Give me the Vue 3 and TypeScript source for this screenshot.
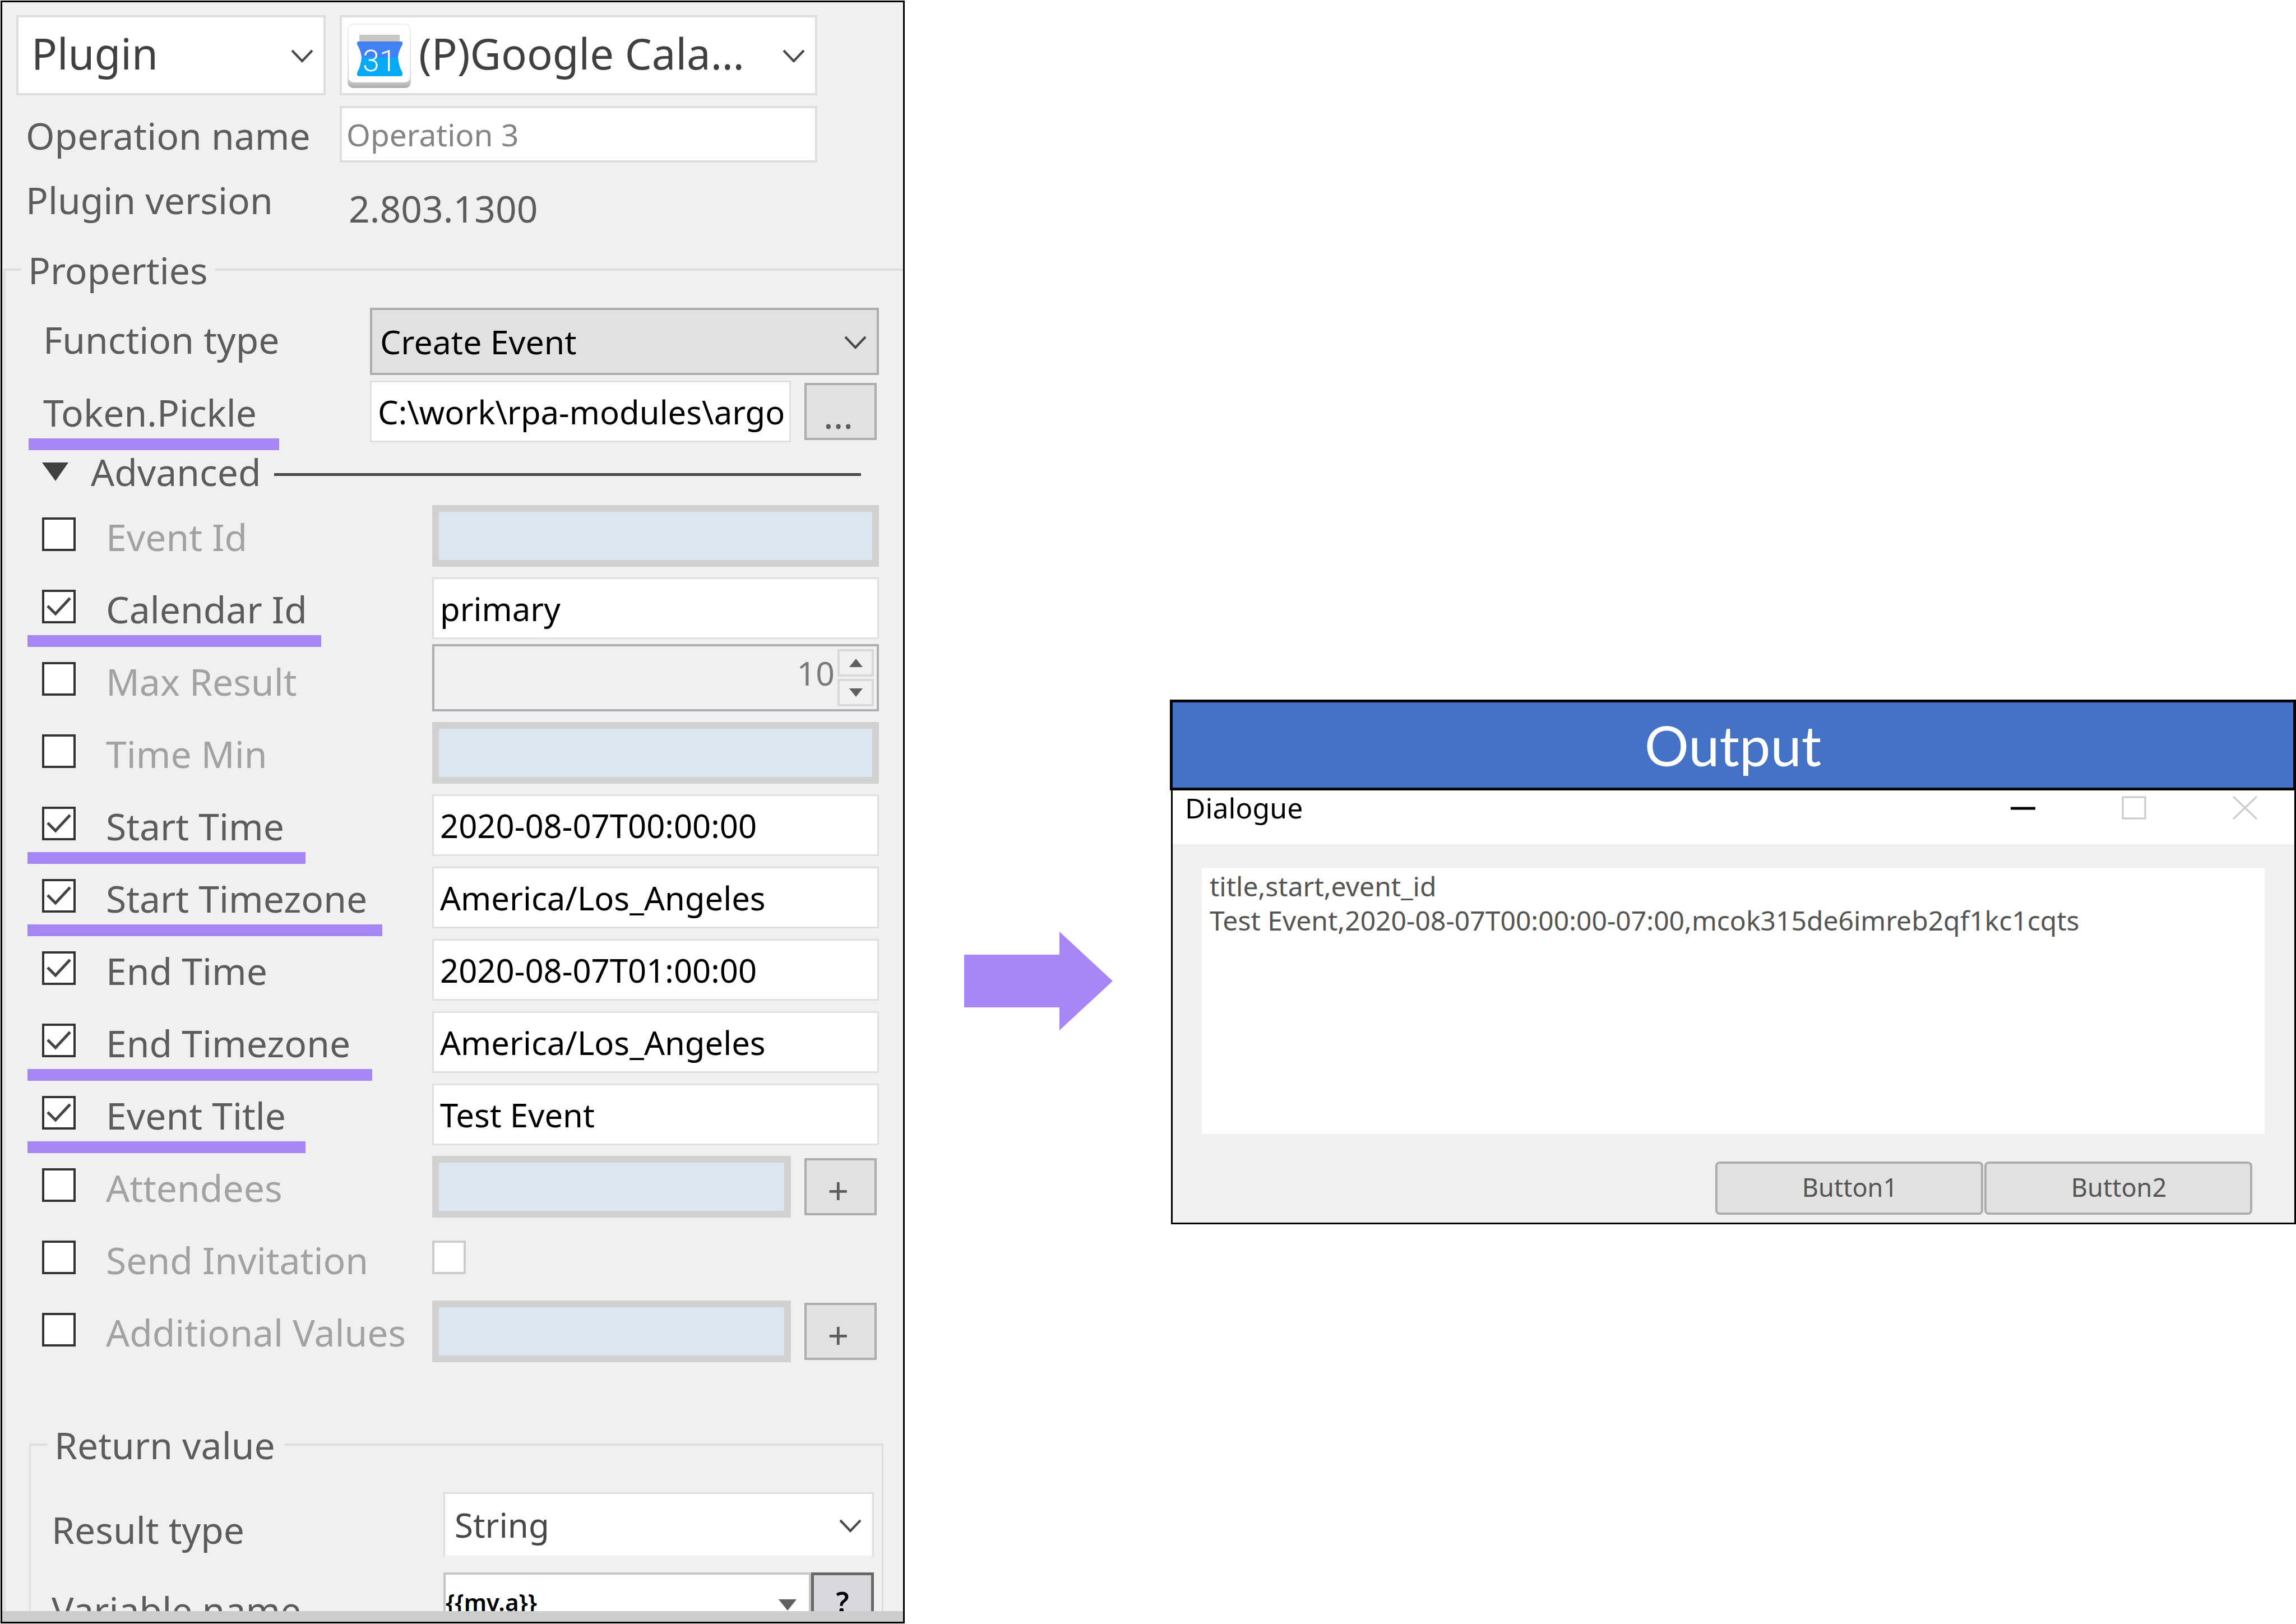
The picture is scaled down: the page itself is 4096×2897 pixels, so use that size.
<script setup lang="ts">
import { ref } from 'vue'

type FieldKind = 'text' | 'number' | 'list' | 'check'

interface AdvancedField {
  id: string
  label: string
  kind: FieldKind
  enabled: boolean
  value: string
  mark: number
}

// mark is the length of the highlight bar under the label, 0 for none
const fields = ref<AdvancedField[]>([
  { id: 'event-id', label: 'Event Id', kind: 'text', enabled: false, value: '', mark: 0 },
  { id: 'calendar-id', label: 'Calendar Id', kind: 'text', enabled: true, value: 'primary', mark: 524 },
  { id: 'max-result', label: 'Max Result', kind: 'number', enabled: false, value: '10', mark: 0 },
  { id: 'time-min', label: 'Time Min', kind: 'text', enabled: false, value: '', mark: 0 },
  { id: 'start-time', label: 'Start Time', kind: 'text', enabled: true, value: '2020-08-07T00:00:00', mark: 496 },
  { id: 'start-zone', label: 'Start Timezone', kind: 'text', enabled: true, value: 'America/Los_Angeles', mark: 633 },
  { id: 'end-time', label: 'End Time', kind: 'text', enabled: true, value: '2020-08-07T01:00:00', mark: 0 },
  { id: 'end-zone', label: 'End Timezone', kind: 'text', enabled: true, value: 'America/Los_Angeles', mark: 615 },
  { id: 'event-title', label: 'Event Title', kind: 'text', enabled: true, value: 'Test Event', mark: 496 },
  { id: 'attendees', label: 'Attendees', kind: 'list', enabled: false, value: '', mark: 0 },
  { id: 'send-invitation', label: 'Send Invitation', kind: 'check', enabled: false, value: '', mark: 0 },
  { id: 'additional', label: 'Additional Values', kind: 'list', enabled: false, value: '', mark: 0 },
])

const operationName = ref('Operation 3')
const tokenPath = ref('C:\\work\\rpa-modules\\argos')
const variableName = ref('{{mv.a}}')
const output = ref('title,start,event_id\nTest Event,2020-08-07T00:00:00-07:00,mcok315de6imreb2qf1kc1cqts')
</script>

<template>
  <main class="page">
    <section class="panel">
      <div class="pane">
        <div class="head">
          <div class="pick">
            <select class="big" aria-label="Operation kind"><option>Plugin</option></select>
            <svg class="chevron" viewBox="0 0 40 24"><path d="M2 2 20 21 38 2" /></svg>
          </div>
          <div class="pick">
            <select class="big with-icon" aria-label="Plugin"><option>(P)Google Cala…</option></select>
            <svg class="calendar" viewBox="0 0 113 117">
              <defs>
                <linearGradient id="tile-edge" x1="0" y1="0" x2="0" y2="1">
                  <stop offset="0" stop-color="#f2f2f2" />
                  <stop offset="0.85" stop-color="#dcdcdc" />
                  <stop offset="1" stop-color="#a8a8a8" />
                </linearGradient>
              </defs>
              <rect x="0" y="1" width="113" height="115" rx="10" fill="url(#tile-edge)" />
              <rect x="2" y="3" width="109" height="103" rx="9" fill="#fff" />
              <rect x="21" y="21" width="72" height="13" fill="#c9c5c3" />
              <path d="M20 33H95Q99 33 98 38Q91 50 90 61H25Q24 50 17 38Q16 33 20 33Z" fill="#4081f5" />
              <path d="M25 61H90Q91 76 98 89Q99 95 94 95H21Q16 95 17 89Q24 76 25 61Z" fill="#06a9f5" />
              <text x="57" y="86" text-anchor="middle" class="day">31</text>
            </svg>
            <svg class="chevron" viewBox="0 0 40 24"><path d="M2 2 20 21 38 2" /></svg>
          </div>
          <label class="head-label" for="operation-name">Operation name</label>
          <input id="operation-name" v-model="operationName" class="name" type="text" />
          <span class="version-label">Plugin version</span>
          <span class="version">2.803.1300</span>
        </div>

        <fieldset class="properties">
          <legend>Properties</legend>
          <div class="basic">
            <div class="basic-row">
              <label for="function-type">Function type</label>
              <div class="pick">
                <select id="function-type" class="grey"><option>Create Event</option></select>
                <svg class="chevron" viewBox="0 0 40 24"><path d="M2 2 20 21 38 2" /></svg>
              </div>
            </div>
            <div class="basic-row">
              <label for="token">Token.Pickle</label>
              <div class="with-button">
                <input id="token" v-model="tokenPath" class="box" type="text" />
                <button class="small" type="button">...</button>
              </div>
              <span class="mark" :style="{ width: '447px' }"></span>
            </div>
          </div>

          <div class="divider">
            <button class="toggle" type="button">
              <svg viewBox="0 0 47 33"><path d="M0 0H47L24 33Z" /></svg>
              Advanced
            </button>
            <span class="rule"></span>
          </div>

          <div class="advanced">
            <div v-for="field in fields" :key="field.id" class="row">
              <span class="tick">
                <input :id="field.id" v-model="field.enabled" type="checkbox" />
                <svg v-if="field.enabled" viewBox="0 0 60 60"><path d="M10 29 24 43 50 15" /></svg>
              </span>
              <label :for="field.id" :class="{ off: !field.enabled }">{{ field.label }}</label>
              <input
                v-if="field.kind === 'text'"
                v-model="field.value"
                class="box"
                type="text"
                :aria-label="field.label"
                :disabled="!field.enabled"
              />
              <div v-else-if="field.kind === 'number'" class="spinner">
                <input v-model="field.value" type="text" :aria-label="field.label" disabled />
                <span class="steps">
                  <button type="button" aria-label="Increase"><svg viewBox="0 0 24 15"><path d="M12 0 24 15H0Z" /></svg></button>
                  <button type="button" aria-label="Decrease"><svg viewBox="0 0 24 15"><path d="M12 15 24 0H0Z" /></svg></button>
                </span>
              </div>
              <div v-else-if="field.kind === 'list'" class="with-button">
                <input v-model="field.value" class="box" type="text" :aria-label="field.label" disabled />
                <button class="small" type="button">+</button>
              </div>
              <span v-else class="tick faint">
                <input type="checkbox" :aria-label="field.label" disabled />
              </span>
              <span v-if="field.mark" class="mark" :style="{ width: field.mark + 'px' }"></span>
            </div>
          </div>

          <fieldset class="result">
            <legend>Return value</legend>
            <div class="result-row">
              <label for="result-type">Result type</label>
              <div class="pick">
                <select id="result-type" class="plain"><option>String</option></select>
                <svg class="chevron" viewBox="0 0 40 24"><path d="M2 2 20 21 38 2" /></svg>
              </div>
            </div>
            <div class="result-row">
              <label for="variable">Variable name</label>
              <div class="variable">
                <span class="combo">
                  <input id="variable" v-model="variableName" type="text" />
                  <svg viewBox="0 0 32 20"><path d="M0 0H32L16 20Z" /></svg>
                </span>
                <button type="button">?</button>
              </div>
            </div>
          </fieldset>
        </fieldset>
      </div>
      <div class="scrollbar"></div>
    </section>

    <svg class="arrow" viewBox="0 0 265 176"><path d="M0 41H170V0L265 88L170 176V135H0Z" /></svg>

    <section class="output">
      <h2>Output</h2>
      <div class="dialog">
        <header>
          <span class="title">Dialogue</span>
          <button type="button" aria-label="Minimize">
            <svg viewBox="0 0 44 42"><path d="M0 22H44" stroke="#000" stroke-width="5" /></svg>
          </button>
          <button type="button" aria-label="Maximize">
            <svg viewBox="0 0 44 42"><path d="M2 2H42V40H2Z" stroke="#c8c8c8" stroke-width="3" /></svg>
          </button>
          <button type="button" aria-label="Close">
            <svg viewBox="0 0 44 42"><path d="M1 1 43 41M43 1 1 41" stroke="#c8c8c8" stroke-width="3" /></svg>
          </button>
        </header>
        <div class="content">
          <textarea v-model="output" aria-label="Result" spellcheck="false"></textarea>
          <div class="actions">
            <button type="button">Button1</button>
            <button type="button">Button2</button>
          </div>
        </div>
      </div>
    </section>
  </main>
</template>

<style>
body {
  margin: 0;
  background: #fff;
}
</style>

<style scoped>
* {
  box-sizing: border-box;
}

.page {
  display: grid;
  grid-template-columns: 1614fr 473fr 2009fr;
  height: 100vh;
  overflow: hidden;
  font-family: 'Noto Sans', sans-serif;
  font-size: 66px;
  line-height: 90px;
  color: #5c5c5c;
}

input,
select,
button,
textarea {
  margin: 0;
  padding: 0;
  border-radius: 0;
  font-family: inherit;
  appearance: none;
  outline: none;
}

label,
legend {
  white-space: nowrap;
}

/* Settings panel */
.panel {
  display: flex;
  flex-direction: column;
  min-width: 0;
  min-height: 0;
  margin: 1px 0 1px 1px;
  border: 3px solid #000;
  background: #f0f0f0;
}

.pane {
  flex: 1;
  min-height: 0;
  overflow: hidden;
}

.scrollbar {
  flex: none;
  height: 19px;
  background: #cdcdcd;
}

.head {
  display: grid;
  grid-template-columns: 552fr 852fr;
  column-gap: 25px;
  padding: 23px 153px 0 25px;
}

.pick {
  position: relative;
}

select {
  display: block;
  width: 100%;
}

.big {
  height: 143px;
  padding: 0 70px 8px 23px;
  border: 4px solid #dedede;
  background: #fff;
  font-size: 76px;
  color: #404040;
}

.with-icon {
  padding-left: 137px;
}

.chevron {
  position: absolute;
  top: 3px;
  bottom: 0;
  right: 22px;
  width: 40px;
  height: 24px;
  margin: auto 0;
  pointer-events: none;
}

.chevron path {
  fill: none;
  stroke: #484848;
  stroke-width: 4;
}

.calendar {
  position: absolute;
  left: 14px;
  top: 14px;
  width: 113px;
  height: 117px;
  pointer-events: none;
}

.day {
  font-family: Roboto, sans-serif;
  font-size: 54px;
  font-weight: 300;
  fill: #fff;
}

.head-label {
  margin-top: 19px;
  padding: 7px 0 0 17px;
}

.name {
  width: 100%;
  height: 101px;
  margin-top: 19px;
  padding: 0 8px;
  border: 4px solid #dedede;
  background: #fff;
  font-size: 55px;
  color: #858585;
}

.version-label {
  padding: 21px 0 0 17px;
}

.version {
  padding: 36px 0 0 16px;
}

/* Properties group */
fieldset {
  min-width: 0;
  margin: 0;
  padding: 0;
  border-style: solid;
  border-color: #dedede;
}

.properties {
  margin: 20px 0 0 2px;
  border-width: 4px 0 0 4px;
}

.properties > legend {
  margin-left: 28px;
  padding: 0 13px 0 12px;
}

.basic {
  display: grid;
  row-gap: 10px;
  padding: 23px 43px 0 67px;
}

.basic-row {
  position: relative;
  display: grid;
  grid-template-columns: 583fr 908fr;
  align-items: start;
}

.basic-row label,
.row label {
  line-height: 112px;
}

.grey {
  height: 120px;
  padding: 0 70px 0 14px;
  border: 4px solid #adadad;
  background: #e1e1e1;
  font-size: 59px;
  color: #000;
}

.box {
  display: block;
  width: 100%;
  height: 110px;
  padding: 0 11px;
  border: 3px solid #e0e0e0;
  background: #fff;
  font-size: 58px;
  color: #000;
}

.box:disabled {
  border: 12px solid #d1d1d1;
  background: #dce6f1;
}

.with-button {
  display: flex;
  align-items: center;
  gap: 24px;
  padding-right: 4px;
}

.with-button .box {
  flex: 1;
  min-width: 0;
}

.small {
  flex: none;
  width: 129px;
  height: 102px;
  padding: 10px 8px 0 0;
  border: 4px solid #adadad;
  background: #e1e1e1;
  font-size: 66px;
  line-height: 82px;
  color: #5c5c5c;
}

/* Highlight bar laid over the rows */
.mark {
  position: absolute;
  left: -26px;
  top: 103px;
  height: 21px;
  background: #a787f8;
  z-index: 1;
}

.divider {
  display: flex;
  align-items: center;
  gap: 23px;
  padding: 5px 75px 0 65px;
}

.toggle {
  display: flex;
  align-items: center;
  gap: 40px;
  border: 0;
  background: none;
  font-size: 66px;
  line-height: 90px;
  color: #5c5c5c;
}

.toggle svg {
  width: 47px;
  height: 33px;
  fill: #404040;
}

.rule {
  flex: 1;
  height: 5px;
  margin-top: 10px;
  background: #484848;
}

.advanced {
  display: grid;
  grid-auto-rows: 110px;
  row-gap: 19px;
  padding: 15px 43px 0 65px;
}

.row {
  position: relative;
  display: grid;
  grid-template-columns: 114px 582fr 797fr;
  grid-template-rows: 110px;
  align-items: start;
}

.off {
  color: #a2a2a2;
}

.tick {
  position: relative;
  width: 60px;
  height: 60px;
  margin-top: 22px;
}

.tick input {
  display: block;
  width: 60px;
  height: 60px;
  border: 4px solid #333;
  background: #fff;
}

.faint input {
  border-color: #cccccc;
}

.tick svg {
  position: absolute;
  inset: 0;
  pointer-events: none;
}

.tick path {
  fill: none;
  stroke: #444;
  stroke-width: 5;
}

.spinner {
  display: flex;
  align-self: end;
  min-width: 0;
  height: 120px;
  padding: 5px;
  border: 4px solid #adadb2;
  background: #f0f0f0;
}

.spinner input {
  flex: 1;
  min-width: 0;
  padding: 0 5px 18px 0;
  border: 0;
  background: none;
  font-size: 59px;
  text-align: right;
  color: #7a7a7a;
}

.steps {
  display: flex;
  flex-direction: column;
  gap: 4px;
}

.steps button {
  display: flex;
  flex: 1;
  align-items: center;
  justify-content: center;
  width: 65px;
  border: 4px solid #d8d8d8;
  background: #f0f0f0;
}

.steps svg {
  width: 24px;
  height: 15px;
  fill: #606060;
}

/* Return value group */
.result {
  margin: 102px 35px 0 42px;
  padding-bottom: 60px;
  border-width: 4px 3px 3px;
}

.result legend {
  margin-left: 29px;
  padding: 0 17px 0 13px;
}

.result-row {
  display: grid;
  grid-template-columns: 699fr 768fr;
  align-items: start;
  height: 143px;
  padding: 0 14px 0 37px;
}

.result legend + .result-row {
  margin-top: 40px;
}

.result-row label {
  line-height: 132px;
}

.plain {
  height: 116px;
  padding: 0 70px 0 17px;
  border: 3px solid #dedede;
  border-bottom-color: #f0f0f0;
  background: #fff;
  font-size: 60px;
  color: #484848;
}

.variable {
  display: flex;
  min-width: 0;
  height: 104px;
}

.combo {
  display: flex;
  flex: 1;
  align-items: center;
  min-width: 0;
  padding-right: 22px;
  border: 4px solid #c6c6c6;
  background: #fff;
}

.combo input {
  flex: 1;
  min-width: 0;
  border: 0;
  background: none;
  font-size: 42px;
  font-weight: 600;
  color: #000;
}

.combo svg {
  width: 32px;
  height: 20px;
  margin-top: 12px;
  fill: #606060;
}

.variable button {
  flex: none;
  width: 112px;
  border: 5px solid #686868;
  background: #d8d8de;
  font-size: 50px;
  font-weight: 600;
  line-height: 60px;
  color: #000;
}

/* Arrow between the panel and its output */
.arrow {
  justify-self: center;
  width: 265px;
  height: 176px;
  margin: 1662px 0 0 3px;
  fill: #a787f8;
}

/* Output dialog */
.output {
  min-width: 0;
  margin-top: 1248px;
}

h2 {
  margin: 0;
  border: 5px solid #000;
  background: #4472c6;
  font-family: Lato, sans-serif;
  font-size: 99px;
  font-weight: 400;
  line-height: 152px;
  text-align: center;
  color: #fff;
}

.dialog {
  margin-left: 2px;
  border: 3px solid #000;
  border-top: 0;
  background: #fff;
}

.dialog header {
  display: flex;
  align-items: center;
  gap: 154px;
  height: 96px;
  padding: 0 66px 34px 22px;
}

.title {
  flex: 1;
  font-size: 50px;
  line-height: 64px;
  color: #000;
}

header button {
  border: 0;
  background: none;
  line-height: 0;
}

header svg {
  width: 44px;
  height: 42px;
  fill: none;
}

.content {
  padding: 42px 53px 14px 52px;
  background: #f0f0f0;
}

textarea {
  display: block;
  width: 100%;
  height: 475px;
  padding: 2px 14px 0;
  border: 0;
  background: #fff;
  font-size: 48px;
  line-height: 61px;
  color: #555;
  resize: none;
  overflow: hidden;
}

.actions {
  display: flex;
  justify-content: flex-end;
  gap: 2px;
  margin-top: 49px;
  padding-right: 22px;
}

.actions button {
  width: 478px;
  height: 95px;
  padding: 0 0 5px 2px;
  border: 4px solid #adadad;
  border-radius: 8px;
  background: #e1e1e1;
  font-size: 45px;
  color: #555;
}
</style>
